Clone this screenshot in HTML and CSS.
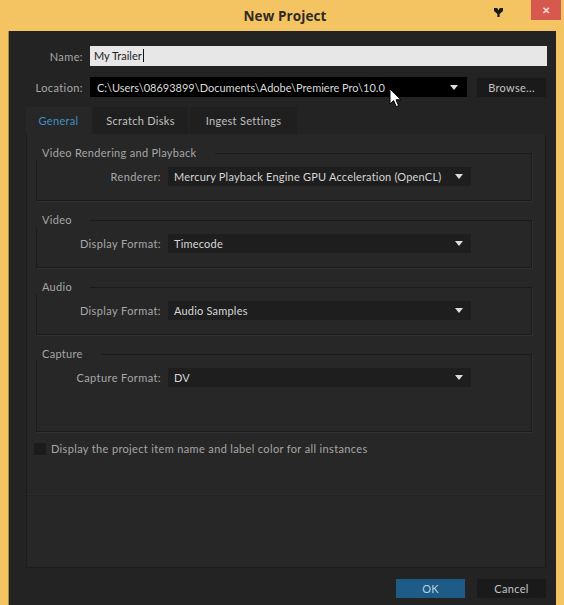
FILE: index.html
```html
<!DOCTYPE html>
<html lang="en">
  <head>
    <meta charset="UTF-8" />
    <title>New Project</title>
    <link rel="stylesheet" href="styles.css">
  </head>
  <body>
    <div class="window">
      <!-- Title bar -->
      <div class="titlebar">
        <span class="title">New Project</span>
        <svg class="pin" width="9" height="9" viewBox="0 0 9 9">
          <path d="M0 0 H3.2 L4.5 2.2 L5.8 0 H9 V3 L5.6 6 V9 H3.4 V6 L0 3 Z" fill="#1a1a1a" />
        </svg>
        <div class="close">&#x2715;</div>
      </div>

      <div class="client">
        <!-- Name / Location -->
        <div class="top-form">
          <label class="lbl">Name:</label>
          <div class="text-input">My Trailer<span class="caret"></span></div>

          <label class="lbl">Location:</label>
          <div class="loc-select">
            <span>C:\Users\08693899\Documents\Adobe\Premiere Pro\10.0</span>
            <span class="arrow"></span>
          </div>
          <button class="btn btn-dark">Browse...</button>
        </div>

        <!-- Tabs -->
        <div class="tabs">
          <div class="tab active">General</div>
          <div class="tab">Scratch Disks</div>
          <div class="tab">Ingest Settings</div>
        </div>

        <div class="panel">
          <fieldset class="group">
            <legend>Video Rendering and Playback</legend>
            <div class="row">
              <label class="lbl">Renderer:</label>
              <div class="select"><span>Mercury Playback Engine GPU Acceleration (OpenCL)</span><span class="arrow"></span></div>
            </div>
          </fieldset>

          <fieldset class="group">
            <legend>Video</legend>
            <div class="row">
              <label class="lbl">Display Format:</label>
              <div class="select"><span>Timecode</span><span class="arrow"></span></div>
            </div>
          </fieldset>

          <fieldset class="group">
            <legend>Audio</legend>
            <div class="row">
              <label class="lbl">Display Format:</label>
              <div class="select"><span>Audio Samples</span><span class="arrow"></span></div>
            </div>
          </fieldset>

          <fieldset class="group group-tall">
            <legend>Capture</legend>
            <div class="row">
              <label class="lbl">Capture Format:</label>
              <div class="select"><span>DV</span><span class="arrow"></span></div>
            </div>
          </fieldset>

          <label class="check">
            <span class="box"></span>
            Display the project item name and label color for all instances
          </label>

          <div class="divider"></div>
        </div>

        <div class="buttons">
          <button class="btn btn-ok">OK</button>
          <button class="btn btn-dark">Cancel</button>
        </div>

        <!-- mouse pointer caught in the screenshot -->
        <svg class="cursor" width="13" height="20" viewBox="0 0 13 20">
          <path d="M1 1 V16 L4.6 12.6 L7.2 18.6 L9.6 17.6 L7 11.8 H12 Z" fill="#fff" stroke="#000" stroke-width="1" />
        </svg>
      </div>
    </div>
  </body>
</html>
```

FILE: styles.css
```css
body {
  margin: 0;
  background: #f4c462;
  font-family: Lato, "Open Sans", sans-serif;
  font-size: 11px;
  letter-spacing: 0.3px;
  color: #b0b0b0;
}

.window {
  width: 564px;
  height: 605px;
  overflow: hidden;
}

.titlebar {
  position: relative;
  height: 31px;
  display: flex;
  align-items: center;
  justify-content: center;
}

.title {
  font-family: "Open Sans", sans-serif;
  font-weight: 700;
  font-size: 13.5px;
  letter-spacing: 0.1px;
  color: #2f2a22;
  margin-left: 6px;
  margin-top: 1px;
}

.pin {
  position: absolute;
  left: 494px;
  top: 8px;
}

.close {
  position: absolute;
  right: 3px;
  top: 0;
  width: 30px;
  height: 20px;
  background: #d6584f;
  color: #f6dcd8;
  font-size: 10px;
  font-weight: 700;
  display: flex;
  align-items: center;
  justify-content: center;
}

.client {
  position: relative;
  margin: 0 8px;
  height: 574px;
  box-sizing: border-box;
  background: #232323;
  padding: 15px 10px 0 17px;
  border-left: 1px solid #a88a40;
}

.top-form {
  display: grid;
  grid-template-columns: 57px 1fr 69px;
  column-gap: 7px;
  row-gap: 11px;
  align-items: center;
}

.lbl {
  text-align: right;
  color: #a8a8a8;
  white-space: nowrap;
  letter-spacing: 0.4px;
}

.text-input {
  grid-column: 2 / 4;
  height: 20px;
  line-height: 20px;
  background: #e7e7e7;
  color: #222;
  padding-left: 4px;
  margin-right: -1px;
  letter-spacing: 0;
}

.caret {
  display: inline-block;
  width: 1px;
  height: 13px;
  background: #111;
  vertical-align: -2px;
  margin-left: 1px;
}

.loc-select {
  height: 20px;
  background: #000;
  color: #dadada;
  display: flex;
  align-items: center;
  justify-content: space-between;
  padding: 0 9px 0 7px;
  margin-right: 3px;
  letter-spacing: 0;
}

.arrow {
  width: 0;
  height: 0;
  border-left: 4px solid transparent;
  border-right: 4px solid transparent;
  border-top: 5px solid #dcdcdc;
}

.btn {
  font-family: Lato, "Open Sans", sans-serif;
  font-size: 11px;
  letter-spacing: 0.3px;
  border: none;
  height: 19px;
  padding: 0;
  cursor: pointer;
}

.btn-dark {
  background: #1a1a1a;
  color: #c4c4c4;
  width: 69px;
}

.btn-ok {
  background: #1e5c87;
  color: #b9d1e2;
  width: 69px;
}

.tabs {
  display: flex;
  gap: 2px;
  margin-top: 10px;
  height: 27px;
}

.tab {
  display: flex;
  align-items: center;
  justify-content: center;
  box-sizing: border-box;
  background: #1f1f1f;
  color: #c0c0c0;
}

.tab:nth-child(2) { width: 95px; }
.tab:nth-child(3) { width: 107px; }

.tab.active {
  background: #272727;
  color: #3f90c8;
  width: 65px;
}

.panel {
  height: 434px;
  box-sizing: border-box;
  background: #272727;
  border: 1px solid #1c1c1c;
  border-top: none;
  padding: 12px 13px 0 9px;
  position: relative;
}

.group {
  margin: 0 0 12px 0;
  padding: 7px 0 14px 0;
  border: 1px solid #1b1b1b;
  box-shadow: 1px 1px 0 #303030;
}

.group legend {
  color: #a6a6a6;
  padding: 0 18px 0 6px;
  margin-left: -1px;
  height: 14px;
  line-height: 14px;
}

.group-tall {
  padding-bottom: 44px;
}

.row {
  display: grid;
  grid-template-columns: 124px 303px;
  column-gap: 7px;
  align-items: center;
}

.select {
  height: 19px;
  background: #1e1e1e;
  color: #d6d6d6;
  display: flex;
  align-items: center;
  justify-content: space-between;
  padding: 0 8px 0 6px;
  letter-spacing: 0.2px;
}

.check {
  display: flex;
  align-items: center;
  gap: 5px;
  margin: -2px 0 0 -2px;
  color: #a6a6a6;
  letter-spacing: 0.35px;
}

.box {
  width: 12px;
  height: 12px;
  background: #1b1b1b;
}

.divider {
  margin: 39px -13px 0 -9px;
  border-top: 1px solid #2b2b2b;
  border-bottom: 1px solid #222;
}

.buttons {
  display: flex;
  justify-content: flex-end;
  gap: 12px;
  margin-top: 11px;
}

.cursor {
  position: absolute;
  left: 380px;
  top: 57px;
}
```
